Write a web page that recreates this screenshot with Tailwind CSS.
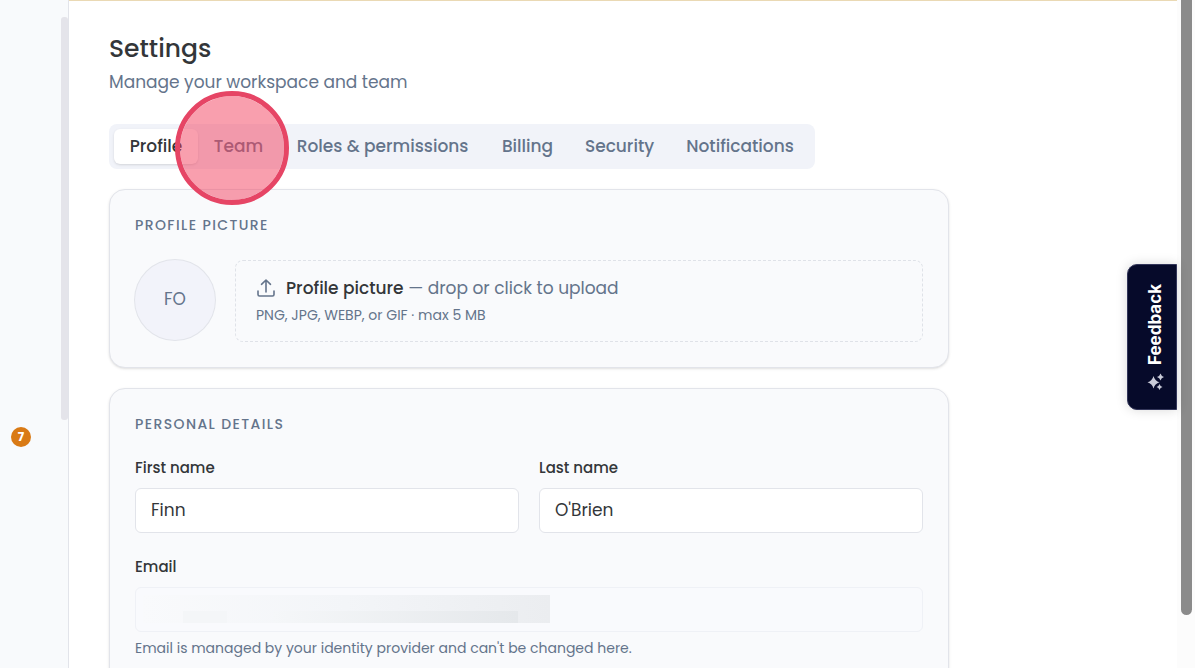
<!DOCTYPE html>
<html lang="en">
<head>
<meta charset="utf-8">
<meta name="viewport" content="width=device-width, initial-scale=1">
<title>Settings</title>
<script src="https://cdn.jsdelivr.net/npm/@tailwindcss/browser@4"></script>
</head>
<body class="flex h-screen overflow-hidden bg-white font-['Poppins','Inter',sans-serif] text-[17px] text-[#333639]">
  <!-- Collapsed sidebar -->
  <aside class="relative w-[69px] shrink-0 border-r border-[#e2e4ea] bg-[#f8fafc]">
    <div class="absolute top-[17px] right-0 h-[403px] w-[7px] rounded-[3px] bg-[#e4e4ea]"></div>
    <span class="absolute top-[427px] left-[11px] flex size-5 items-center justify-center rounded-full bg-[#d97a15] text-[12px] font-bold text-white">7</span>
  </aside>

  <main class="min-w-0 flex-1 border-t border-[#ead9b4] px-10 pt-8">
    <h1 class="text-[25px] leading-8 font-medium">Settings</h1>
    <p class="mt-1 leading-[26px] text-[#64748b]">Manage your workspace and team</p>

    <div class="relative mt-[29px] w-fit">
      <div role="tablist" class="flex rounded-lg bg-[#f1f3f9] p-[5px] font-medium whitespace-nowrap text-[#64748b]">
        <button role="tab" aria-selected="true" class="h-[35px] w-[84px] rounded-md bg-white text-[#333639] shadow-sm">Profile</button>
        <button role="tab" class="h-[35px] w-[81px]">Team</button>
        <button role="tab" class="h-[35px] w-[207px]">Roles &amp; permissions</button>
        <button role="tab" class="h-[35px] w-[83px]">Billing</button>
        <button role="tab" class="h-[35px] w-[101px]">Security</button>
        <button role="tab" class="h-[35px] w-[140px]">Notifications</button>
      </div>
      <!-- Click highlight over the Team tab -->
      <div class="pointer-events-none absolute -top-[33px] left-[66px] z-10 size-[114px] rounded-full border-5 border-[#e64565] bg-[#f43f5e]/50 bg-clip-padding"></div>
    </div>

    <section class="mt-5 max-w-[840px] rounded-2xl border border-[#e2e4ea] bg-[#f9fafc] p-[25px] shadow-sm">
      <h2 class="text-[14px] leading-5 font-medium tracking-widest text-[#64748b] uppercase">Profile picture</h2>
      <div class="mt-[25px] flex gap-5">
        <div class="flex size-20 shrink-0 items-center justify-center rounded-full bg-[#f2f3fa] text-[#64748b] ring-1 ring-[#e2e4ea]">FO</div>
        <button class="h-[82px] flex-1 rounded-lg border border-dashed border-[#dfe2e8] px-5 pb-[2px] text-left">
          <span class="flex items-center gap-[10px] leading-[26px] text-[#64748b]">
            <svg class="size-5" viewBox="0 0 20 20" fill="none" stroke="currentColor" stroke-width="1.6" stroke-linecap="round" stroke-linejoin="round" aria-hidden="true"><path d="M2 13v3.500A1.500 1.500 0 0 0 3.500 18h13a1.500 1.500 0 0 0 1.500-1.500V13M10 14V2M5.500 6.300 10 2l4.500 4.300"/></svg>
            <span><span class="font-medium text-[#333639]">Profile picture</span> — drop or click to upload</span>
          </span>
          <span class="mt-1 block text-[14px] leading-5 text-[#64748b]">PNG, JPG, WEBP, or GIF · max 5 MB</span>
        </button>
      </div>
    </section>

    <section class="mt-5 max-w-[840px] rounded-2xl border border-[#e2e4ea] bg-[#f9fafc] p-[25px] shadow-sm">
      <h2 class="text-[14px] leading-5 font-medium tracking-widest text-[#64748b] uppercase">Personal details</h2>
      <div class="mt-[23px] grid grid-cols-2 gap-x-5 gap-y-[23px]">
        <div>
          <label for="first" class="block text-[15px] leading-[22px] font-medium">First name</label>
          <input id="first" type="text" value="Finn" class="mt-[9px] h-[45px] w-full rounded-md border border-[#e2e4ea] bg-white px-[15px] pb-[2px]">
        </div>
        <div>
          <label for="last" class="block text-[15px] leading-[22px] font-medium">Last name</label>
          <input id="last" type="text" value="O'Brien" class="mt-[9px] h-[45px] w-full rounded-md border border-[#e2e4ea] bg-white px-[15px] pb-[2px]">
        </div>
        <div class="col-span-2">
          <label for="email" class="block text-[15px] leading-[22px] font-medium">Email</label>
          <div class="relative mt-[9px]">
            <input id="email" type="email" disabled class="block h-[45px] w-full rounded-md border border-[#eff1f6] bg-[#f9fafd] px-[15px]">
            <!-- Masked address -->
            <div class="absolute top-2 left-2 flex h-7 w-[407px] flex-col justify-end bg-linear-to-r from-[#f9fafc] via-[#f3f5f8] to-[#ebedf0]">
              <div class="flex h-3">
                <div class="ml-10 w-11 bg-[#f4f6f8]"></div>
                <div class="ml-[46px] w-[245px] bg-linear-to-r from-[#f5f7f9] to-[#e5e8eb]"></div>
              </div>
            </div>
          </div>
          <p class="mt-[6px] text-[14px] leading-5 text-[#64748b]">Email is managed by your identity provider and can't be changed here.</p>
        </div>
      </div>
    </section>
  </main>

  <!-- Page scrollbar -->
  <div class="w-[18px] shrink-0 bg-[#fcfcfc] pl-1">
    <div class="h-[615px] w-[11px] rounded-b-full bg-[#8b8b8b]"></div>
  </div>

  <button class="absolute top-[264px] right-[18px] flex h-[146px] w-[50px] rotate-180 items-center justify-center gap-2 rounded-r-[10px] border border-[#33365a] bg-[#060a2a] pr-2 font-['Inter',sans-serif] text-[17px] font-bold text-white shadow-[0_0_12px_rgba(0,0,0,0.15)] [writing-mode:vertical-rl]">
    <svg class="size-[18px] rotate-180" viewBox="0 0 18 18" fill="#c9cbd8" aria-hidden="true"><path d="M6.500 3Q7.800 8 12.500 9.300 7.800 10.600 6.500 15.600 5.200 10.600.5 9.300 5.200 8 6.500 3ZM13.500.5q.8 2.700 3.500 3.500-2.700.8-3.500 3.500Q12.700 4.800 10 4q2.700-.8 3.500-3.500ZM12.500 11q.7 2.300 3 3-2.300.7-3 3-.7-2.300-3-3 2.300-.7 3-3Z"/></svg>
    Feedback
  </button>
</body>
</html>
